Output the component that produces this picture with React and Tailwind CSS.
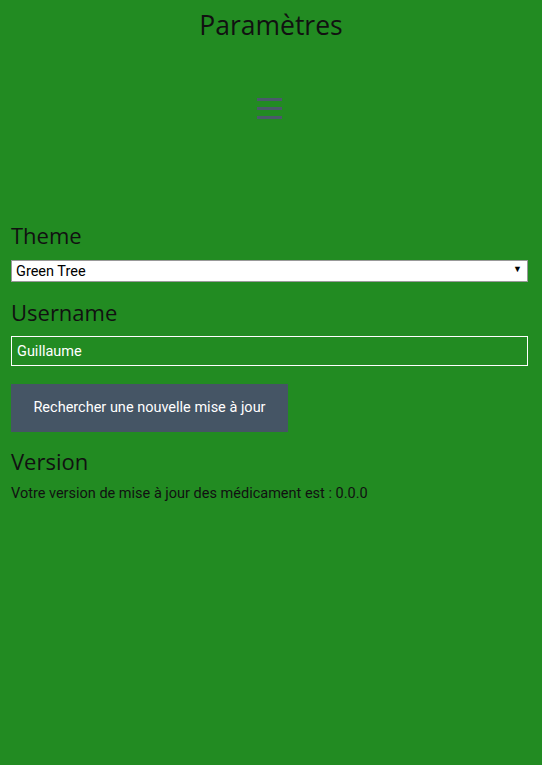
import React, { useState } from 'react';

const App = () => {
  const [theme, setTheme] = useState('green');
  const [username, setUsername] = useState('Guillaume');

  return (
    <div className="min-h-[765px] bg-[#228b22] font-['Roboto',sans-serif] text-black">
      {/* Header */}
      <div className="pt-[6px] text-center">
        <h1 className="font-['Open_Sans',sans-serif] text-[26.5px] leading-[38px] text-[#111]">Paramètres</h1>
      </div>

      {/* Menu */}
      <div className="mt-[54px] flex justify-center">
        <button className="mr-[4px] flex flex-col gap-[6px] w-[25px]">
          <span className="block h-[3px] w-full bg-[#4a5a6a]"></span>
          <span className="block h-[3px] w-full bg-[#4a5a6a]"></span>
          <span className="block h-[3px] w-full bg-[#4a5a6a]"></span>
        </button>
      </div>

      <div className="px-[11px] pt-[101px] pr-[14px]">
        <h2 className="font-['Open_Sans',sans-serif] text-[22px] leading-[30px] text-[#111]">Theme</h2>
        <div className="relative mt-[9px]">
          <select
            value={theme}
            onChange={(e) => setTheme(e.target.value)}
            className="w-full h-[22px] appearance-none bg-white border border-[#999] pl-[4px] text-[14.5px] font-['Roboto',sans-serif] text-black outline-none"
          >
            <option value="green">Green Tree</option>
            <option value="dark">Dark</option>
            <option value="light">Light</option>
          </select>
          <span className="pointer-events-none absolute right-[6px] top-[4px] text-[9px] text-black">▼</span>
        </div>

        <h2 className="mt-[14px] font-['Open_Sans',sans-serif] text-[22px] leading-[30px] text-[#111]">Username</h2>
        <input
          value={username}
          onChange={(e) => setUsername(e.target.value)}
          className="mt-[9px] block w-full h-[30px] border border-white bg-transparent px-[5px] text-[14.5px] font-normal text-white outline-none"
        />

        <button className="mt-[18px] block w-[277px] h-[48px] bg-[#455565] text-white text-[14.5px] font-['Roboto',sans-serif]">
          Rechercher une nouvelle mise à jour
        </button>

        <h2 className="mt-[14px] font-['Open_Sans',sans-serif] text-[22px] leading-[30px] text-[#111]">Version</h2>
        <p className="mt-[7px] text-[14.5px] text-[#111]">Votre version de mise à jour des médicament est : 0.0.0</p>
      </div>
    </div>
  );
};

export default App;
